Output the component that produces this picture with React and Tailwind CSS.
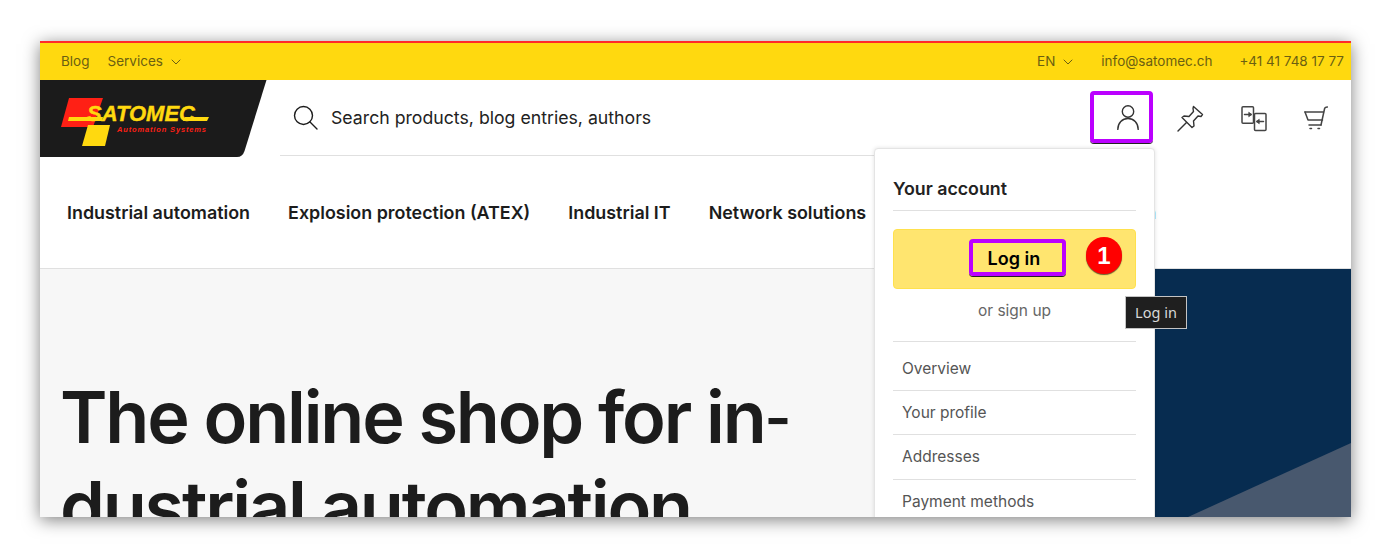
import { ChevronDown } from 'lucide-react'

const navItems = ['Industrial automation', 'Explosion protection (ATEX)', 'Industrial IT', 'Network solutions']

function Logo() {
  return (
    <svg width="150" height="50" viewBox="0 0 150 50" className="block">
      <polygon points="8,1 42,1 32,30 0,30" fill="#ff2015" />
      <polygon points="27,28 49,28 44,49 21,49" fill="#ffd90f" />
      <polygon points="8,20 42,20 41,24 7,24" fill="#ffd90f" />
      <polygon points="124,20 148,20 146,24 122,24" fill="#ffd90f" />
      <text x="26" y="24" fontFamily="Liberation Sans, sans-serif" fontSize="22" fontWeight="700" fontStyle="italic" fill="#ffd90f" stroke="#ffd90f" strokeWidth="0.4" textLength="108" lengthAdjust="spacingAndGlyphs">SATOMEC</text>
      <text x="56" y="35" fontFamily="Liberation Sans, sans-serif" fontSize="7.5" fontWeight="700" fontStyle="italic" fill="#ff2015" textLength="89" lengthAdjust="spacing">Automation Systems</text>
    </svg>
  )
}

function SearchIcon() {
  return (
    <svg width="25" height="25" viewBox="0 0 25 25" fill="none" stroke="#1c1c1c" strokeWidth="1.4" strokeLinecap="round">
      <circle cx="10.5" cy="10.5" r="9" />
      <path d="M17 17l7 7" />
    </svg>
  )
}

function UserIcon() {
  return (
    <svg width="22" height="25" viewBox="0 0 22 25" fill="none" stroke="#333" strokeWidth="1.4" strokeLinecap="round">
      <circle cx="11" cy="6.500" r="5.700" />
      <path d="M.8 24.500c0-6.500 4.500-11 10.200-11s10.200 4.500 10.200 11" />
    </svg>
  )
}

function PinIcon() {
  return (
    <svg width="27" height="27" viewBox="0 0 27 27" fill="none" stroke="#333" strokeWidth="1.4" strokeLinejoin="round" strokeLinecap="round">
      <path d="M1 26l8.500-8.500" />
      <path d="M16.500 1.500l9 8-1.500 2-3-.5-4.500 5 .5 5-2 1.500-10-10 2-1.500 5 .5 4.500-5-.5-3z" />
    </svg>
  )
}

function CompareIcon() {
  return (
    <svg width="26" height="26" viewBox="0 0 26 26" fill="none" stroke="#444" strokeWidth="1.500" strokeLinejoin="round" strokeLinecap="round">
      <rect x="1" y="0.800" width="11.500" height="16.500" rx="1" />
      <rect x="13.500" y="7.500" width="11.500" height="17" rx="1" />
      <path d="M3.500 8.500h5" />
      <path d="M8 6.500l3 2-3 2z" fill="#444" strokeWidth="0.8" />
      <path d="M22.500 15.500h-5" />
      <path d="M18 13.500l-3 2 3 2z" fill="#444" strokeWidth="0.8" />
    </svg>
  )
}

function CartIcon() {
  return (
    <svg width="24" height="25" viewBox="0 0 24 25" fill="none" stroke="#444" strokeWidth="1.500" strokeLinejoin="round" strokeLinecap="round">
      <path d="M1 6h18.500" />
      <path d="M1 6l3 8h14.500" />
      <path d="M5 19h12" />
      <path d="M17 19L20.500 3c.2-1.500 1-2 3-2" />
      <path d="M6 22.500h1.500M14 22.500h1.500" />
    </svg>
  )
}

export default function App() {
  return (
    <div className="h-[557px] w-[1391px] bg-white pl-[40px] pt-[41px] font-['Inter',sans-serif]">
      <div className="relative flex h-[476px] w-[1311px] flex-col overflow-hidden bg-white shadow-[0_3px_16px_rgba(0,0,0,0.5)]">
        {/* top bar */}
        <div className="flex h-[39px] shrink-0 items-center justify-between border-t-2 border-[#ff2a2a] bg-[#ffd90f] pl-[21px] pr-[7px] text-[13.5px] text-[#6b5f12]">
          <div className="flex items-center gap-[18px]">
            <span>Blog</span>
            <span className="flex items-center gap-[5px]">Services <ChevronDown size={16} strokeWidth={1.5} /></span>
          </div>
          <div className="flex items-center">
            <span className="flex items-center gap-[5px]">EN <ChevronDown size={16} strokeWidth={1.5} /></span>
            <span className="ml-[25px]">info@satomec.ch</span>
            <span className="ml-[27px]">+41 41 748 17 77</span>
          </div>
        </div>

        {/* header */}
        <div className="flex h-[77px] shrink-0">
          <div className="relative h-[77px] w-[240px] shrink-0 pl-[21px] pt-[17px]">
            <svg width="227" height="77" viewBox="0 0 227 77" className="absolute left-0 top-0">
              <path d="M0 0H226.500L204.500 71Q202.500 77 197 77H0Z" fill="#1b1b1b" />
            </svg>
            <div className="relative"><Logo /></div>
          </div>
          <div className="flex flex-1 items-center">
            <div className="flex h-[76px] w-[794px] items-center gap-[13px] self-start border-b border-[#e0e0e0] pl-[13px] text-[17.7px] text-[#222]">
              <SearchIcon />
              <span className="mt-[2px]">Search products, blog entries, authors</span>
            </div>
          </div>
          <div className="flex items-center pr-[23px]">
            <div className="mb-[3px] mr-[24px] flex h-[52px] w-[63px] items-center justify-end rounded-[4px] border-[4px] border-[#bb00ff] pr-[10px] shadow-[0_1px_0_#222]">
              <UserIcon />
            </div>
            <PinIcon />
            <div className="mx-[37px]"><CompareIcon /></div>
            <CartIcon />
          </div>
        </div>

        {/* main nav */}
        <div className="flex h-[112px] shrink-0 items-center gap-[38px] border-b border-[#e0e0e0] pl-[27px] pt-[2px] text-[17.9px] font-semibold text-[#1c1c1c]">
          {navItems.map(item => <span key={item}>{item}</span>)}
          <span className="w-[252px] whitespace-nowrap text-right text-[#1a66b0]">Promotion</span>
        </div>

        {/* hero */}
        <div className="relative flex min-h-0 flex-1 bg-[#f7f7f7]">
          <h1 className="w-[800px] whitespace-nowrap pl-[20px] pt-[103px] text-[72px] font-semibold leading-[90px] tracking-[-2.2px] text-[#1c1c1c]">
            The online shop for in<span className="inline-block -translate-y-[4px] text-[58px] leading-none">-</span><br />dustrial automation
          </h1>
          <div className="ml-auto h-full w-[360px] bg-[#072c50]">
            <svg width="360" height="248" viewBox="0 0 360 248" className="block">
              <polygon points="197,248 360,174 360,248" fill="#48586e" />
            </svg>
          </div>
        </div>

        {/* account dropdown */}
        <div className="absolute left-[834px] top-[107px] w-[281px] rounded-[4px] border border-[#e4e4e4] bg-white px-[18px] pb-4 pt-[28px] shadow-[0_0_4px_rgba(0,0,0,0.12)]">
          <div className="border-b border-[#e0e0e0] pb-[9px] text-[17.8px] font-semibold leading-[24px] text-[#222]">Your account</div>
          <div className="relative mt-[18px] flex h-[60px] items-center justify-center rounded-[4px] border border-[#ffe14d] bg-[#ffe56f]">
            <div className="mb-[3px] ml-[5px] flex h-[37px] w-[97px] items-center rounded-[4px] border-[4px] border-[#bb00ff] pl-[15px] pt-[1px] text-[18px] font-semibold text-black shadow-[0_1px_0_#222]">Log in</div>
            <div className="absolute left-[192px] top-[7px] flex h-[37px] w-[36px] items-center justify-center rounded-full bg-[#ff0000] font-['Liberation_Sans',sans-serif] text-[24px] font-bold text-white shadow-[0_1px_1px_rgba(0,0,0,0.6)]">1</div>
          </div>
          <div className="mt-[11px] border-b border-[#e0e0e0] pb-[19px] text-center text-[15.5px] leading-[22px] text-[#666]">or sign up</div>
          <div className="h-[49px] border-b border-[#e0e0e0] px-[9px] pt-[16px] text-[15.5px] leading-[22px] text-[#555]">Overview</div>
          <div className="h-[44px] border-b border-[#e0e0e0] px-[9px] pt-[11px] text-[15.5px] leading-[22px] text-[#555]">Your profile</div>
          <div className="h-[45px] border-b border-[#e0e0e0] px-[9px] pt-[11px] text-[15.5px] leading-[22px] text-[#555]">Addresses</div>
          <div className="h-[44px] px-[9px] pt-[11px] text-[15.5px] leading-[22px] text-[#555]">Payment methods</div>
        </div>

        {/* tooltip */}
        <div className="absolute left-[1085px] top-[255px] flex h-[33px] w-[62px] items-center justify-center border border-[#c4c4c4] bg-[#1f1f1f] font-['Noto_Sans',sans-serif] text-[14.5px] text-[#d8d8d8]">Log in</div>
      </div>
    </div>
  )
}
